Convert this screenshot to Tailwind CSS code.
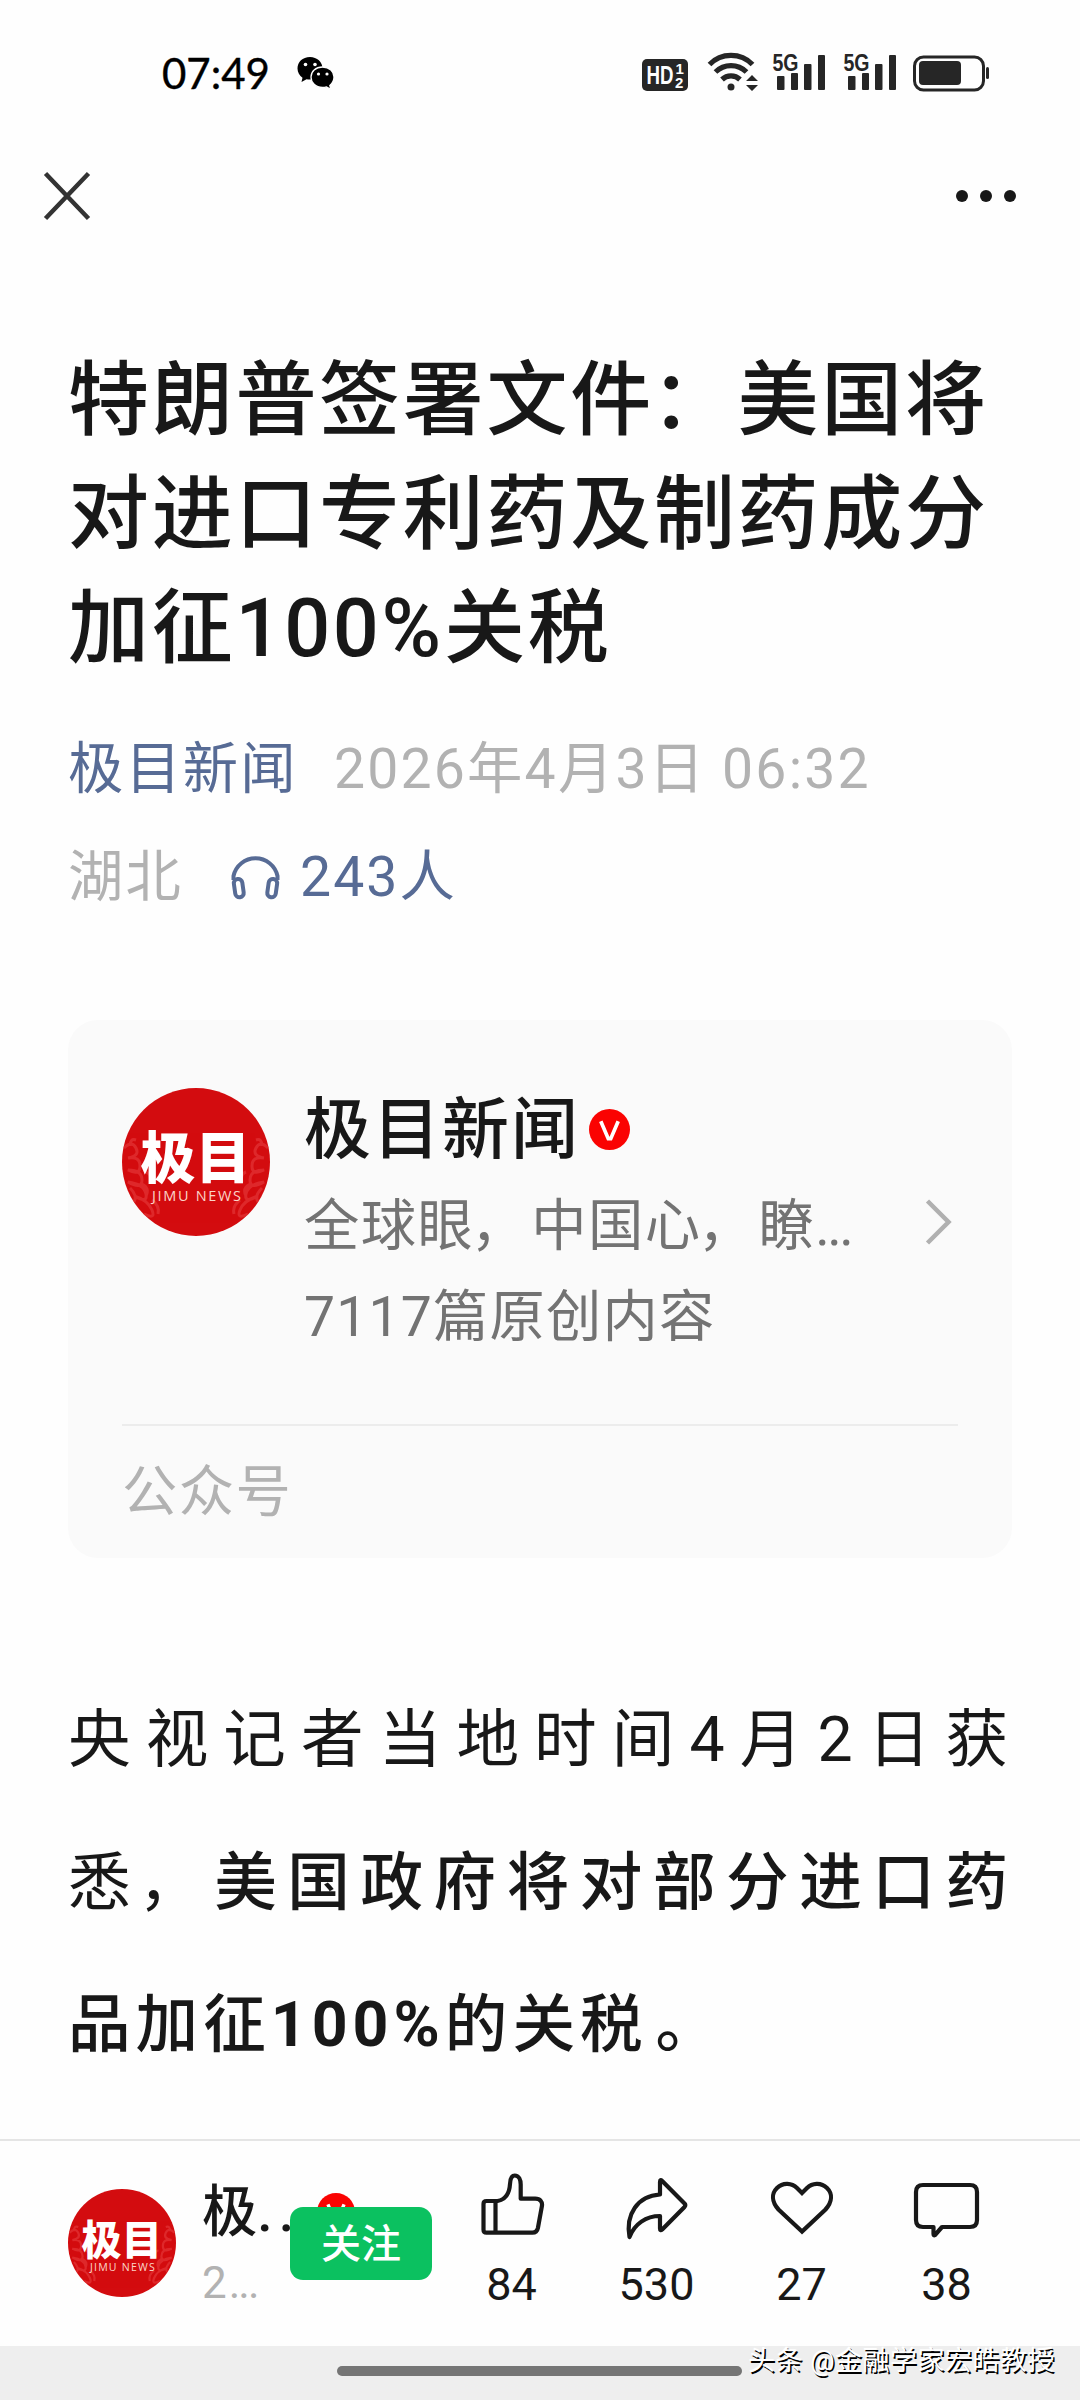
<!DOCTYPE html>
<html lang="zh-CN">
<head>
<meta charset="utf-8">
<title>极目新闻</title>
<script src="https://cdn.jsdelivr.net/npm/@tailwindcss/browser@4"></script>
</head>
<body class="bg-[#fefefe] text-[#181818]">
<div class="relative flex h-[2400px] w-[1080px] flex-col overflow-hidden font-['Roboto','Noto_Sans_CJK_SC',sans-serif]">
  <!-- status bar -->
  <header class="flex h-[146px] shrink-0 items-center pl-[162px]">
    <span class="w-[135px] font-['Lato',sans-serif] text-[42px] leading-none text-black [-webkit-text-stroke:0.4px_#000]">07:49</span>
    <svg class="h-[34px] w-[38px]" viewBox="0 0 38 34">
      <path d="M13 1C5.500 1 .5 6 .5 12.500c0 4 2 7 5 9.200L4.500 26l5-2.800c1.200.3 2.300.4 3.500.4 7 0 12.500-5 12.500-11.200S20 1 13 1Z"/>
      <path d="M25.500 11C18.500 11 14 15.500 14 21s4.500 10.500 11.500 10.500c1.400 0 2.800-.2 4-.6l4.300 2.300-1-3.800c2.500-2 4.200-4.800 4.200-8.400C37 15.500 32.500 11 25.500 11Z" stroke="#fefefe" stroke-width="1.300"/>
      <g fill="#fefefe"><circle cx="8.500" cy="8.500" r="1.800"/><circle cx="18" cy="8.500" r="1.800"/><circle cx="21.500" cy="18" r="1.600"/><circle cx="30" cy="18" r="1.600"/></g>
    </svg>
    <svg class="ml-[306px] h-[64px] w-[350px] overflow-visible" viewBox="641 41 350 64" fill="#262626">
      <rect x="642" y="59" width="46" height="32" rx="5"/>
      <g fill="#fefefe" font-family="Liberation Sans" font-weight="700">
        <text x="646.500" y="84" font-size="26" textLength="27" lengthAdjust="spacingAndGlyphs">HD</text>
        <text x="675.500" y="74" font-size="15">1</text><text x="675" y="87.500" font-size="15">2</text>
      </g>
      <g fill="none" stroke="#262626" stroke-width="5.200">
        <path d="M709.500 64.500a30 30 0 0 1 43 0M715.500 72a22 22 0 0 1 31 0M722 79.500a13 13 0 0 1 18 0"/>
      </g>
      <circle cx="731" cy="87" r="3.500"/>
      <path d="M746 81l6-6 6 6ZM746 85l6 6 6-6Z"/>
      <g id="sig">
        <text x="772.500" y="70.500" font-family="Liberation Sans" font-weight="700" font-size="24" textLength="26" lengthAdjust="spacingAndGlyphs">5G</text>
        <rect x="777" y="76" width="7.500" height="14" rx="1"/><rect x="791" y="73" width="7" height="17" rx="1"/><rect x="804" y="64" width="7.500" height="26" rx="1"/><rect x="818" y="55" width="7" height="35" rx="1"/>
      </g>
      <use href="#sig" x="71"/>
      <rect x="914.500" y="57" width="69" height="33" rx="9" fill="none" stroke="#262626" stroke-width="3"/>
      <rect x="919" y="61" width="42" height="24" rx="4"/>
      <rect x="986" y="67" width="3" height="12" rx="1.500"/>
    </svg>
  </header>
  <!-- navigation bar -->
  <nav class="flex h-[100px] shrink-0 items-center justify-between pr-[64px] pl-[43px]">
    <svg class="h-[50px] w-[50px]" viewBox="0 0 50 50" fill="none" stroke="#333" stroke-width="4.500"><path d="M2.500 2.500l43 45M45.500 2.500l-43 45"/></svg>
    <div class="flex gap-[12px]"><i class="size-[12px] rounded-full bg-[#181818]"></i><i class="size-[12px] rounded-full bg-[#181818]"></i><i class="size-[12px] rounded-full bg-[#181818]"></i></div>
  </nav>

  <main class="px-[68px]">
    <h1 class="mt-[98px] text-[81px] leading-[114px] font-medium tracking-[2.7px] whitespace-nowrap">特朗普签署文件<span class="relative left-[-3px]">：</span>美国将<br>对进口专利药及制药成分<br>加征100%关税</h1>
    <div class="mt-[30px] text-[55.3px] leading-[108px] tracking-[2.1px] whitespace-nowrap text-[#b2b2b2]">
      <div class="flex"><span class="w-[266px] text-[#576b95]">极目新闻</span><span class="tracking-[2.2px]">2026年4月3日 06:32</span></div>
      <div class="flex items-center"><span class="w-[162px]">湖北</span>
        <svg class="mr-[19px] mb-[5px] h-[50px] w-[51px]" viewBox="0 0 51 50" fill="none" stroke="#576b95" stroke-width="4"><path d="M3.500 29v-4a22.500 22.500 0 0 1 44 0v4"/><rect x="4.500" y="28" width="8.500" height="18.500" rx="4.200" transform="rotate(-8 8 37)"/><rect x="38" y="28" width="8.500" height="18.500" rx="4.200" transform="rotate(8 43 37)"/></svg>
        <span class="text-[#576b95]">243人</span></div>
    </div>

    <!-- official account card -->
    <section class="mt-[88px] flex h-[538px] flex-col rounded-[30px] bg-[#fafafa] px-[54px]">
      <div class="flex h-[406px] shrink-0 border-b-2 border-[#ececec] pt-[64px]">
        <svg class="mt-[4px] size-[148px] shrink-0" viewBox="0 0 148 148">
          <defs>
            <clipPath id="disc"><circle cx="74" cy="74" r="74"/></clipPath>
            <g id="logo"><circle cx="74" cy="74" r="74" fill="#d30c0f"/>
              <g clip-path="url(#disc)" fill="none" stroke="#e4383a" stroke-width="3" opacity=".65">
                <path d="M2 60q8-8 12 0t-8 10q12-2 12 8t-12 4q14 0 14 10t-14 2q16 2 18 12t-12 2q14 4 18 14t-8 4M20 96q8 4 4 12M14 52q-6-2-6 6M30 112q8 6 6 14M8 100q8 8 4 14M24 84q6 2 4 10"/>
                <path d="M146 60q-8-8-12 0t8 10q-12-2-12 8t12 4q-14 0-14 10t14 2q-16 2-18 12t12 2q-14 4-18 14t8 4M128 96q-8 4-4 12M134 52q6-2 6 6M118 112q-8 6-6 14M140 100q-8 8-4 14M124 84q-6 2-4 10"/>
              </g>
              <text x="18.500" y="90" fill="#fff" font-family="Noto Sans CJK SC" font-weight="900" font-size="56" textLength="110" lengthAdjust="spacingAndGlyphs">极目</text>
              <text x="30" y="112.500" fill="#fbd5c8" font-family="Open Sans" font-size="14.500" textLength="89">JIMU NEWS</text>
            </g>
          </defs>
          <use href="#logo"/>
        </svg>
        <div class="ml-[34px] w-[590px] whitespace-nowrap">
          <div class="flex h-[92px] items-center"><span class="text-[67px] leading-[92px] font-medium tracking-[2px]">极目新闻</span>
            <svg class="mb-[1px] ml-[9px] size-[41px]" viewBox="0 0 40 40"><circle cx="20" cy="20" r="20" fill="#fa0302"/><path d="M11.500 12l7.300 17h2.400l7.300-17" fill="none" stroke="#fff" stroke-width="3.600"/></svg></div>
          <p class="mt-[5px] text-[55.3px] leading-[91px] tracking-[1.500px] text-[#737373]">全球眼<span class="relative left-[-4px]">，</span>中国心<span class="relative left-[-4px]">，</span>瞭<span class="-tracking-[2.6px]">...</span></p>
          <p class="text-[55.3px] leading-[91px] tracking-[1.200px] text-[#737373]">7117篇原创内容</p>
        </div>
        <svg class="mt-[115px] ml-[30px] h-[46px] w-[28px] shrink-0" viewBox="0 0 28 46" fill="none" stroke="#b0b0b0" stroke-width="4.500"><path d="M3.500 2l21 21-21 21"/></svg>
      </div>
      <div class="pt-[13px] text-[55.3px] leading-[108px] tracking-[1.500px] text-[#b2b2b2]">公众号</div>
    </section>

    <!-- article body -->
    <article class="mt-[111px] text-[62.6px] leading-[142.500px] tracking-[5px] whitespace-nowrap">
      <div class="w-[945px] [text-align-last:justify]">央视记者当地时间4月2日获</div>
      <div class="w-[945px] [text-align-last:justify]">悉<span class="relative left-[-3px]">，</span><span class="font-medium">美国政府将对部分进口药</span></div>
      <div class="font-medium">品加征<b class="font-bold">100%</b>的关税<span class="relative left-[8px]">。</span></div>
    </article>
  </main>

  <!-- bottom toolbar -->
  <footer class="absolute inset-x-0 top-[2139px] flex h-[207px] border-t-2 border-[#e5e5e5] bg-[#fefefe] pl-[68px]">
    <svg class="mt-[48px] size-[108px] shrink-0" viewBox="0 0 148 148"><use href="#logo"/></svg>
    <div class="relative ml-[26px] w-[237px] whitespace-nowrap">
      <div class="mt-[32px] flex items-center leading-[80px]"><span class="text-[55.3px] font-medium">极<span class="tracking-[6px]">..</span></span></div>
      <div class="mt-[-2px] text-[44px] leading-[64px] text-[#b2b2b2]">2<span class="ml-[2px] -tracking-[2px]">...</span></div>
      <svg class="absolute top-[52px] left-[115px] size-[38px]" viewBox="0 0 40 40"><circle cx="20" cy="20" r="20" fill="#fa0302"/><path d="M11.500 12l7.300 17h2.400l7.300-17" fill="none" stroke="#fff" stroke-width="3.600"/></svg>
      <button class="absolute top-[66px] left-[88px] h-[73px] w-[142px] rounded-[13px] bg-[#0bc160] text-[40px] leading-[75px] font-medium text-white">关注</button>
    </div>
    <div class="grid w-[580px] grid-cols-4 text-center text-[45px] leading-[60px]">
      <div class="flex flex-col items-center pt-[28px]"><svg class="h-[76px] w-[70px]" viewBox="478 2169 70 76" fill="none" stroke="#181818" stroke-width="4.200" stroke-linejoin="round"><path d="M484.500 2204q0-3 3-3h11c8-1.500 12-8 12.500-17 .3-5.500 1.500-8.500 4.700-8.500 4.300 0 6 4.500 6 9v14.200h14.500c5 0 7.500 3 6.700 7.500l-4 21.800q-1 4.700-5.500 4.700H487.500q-3 0-3-3ZM496.500 2201v31"/></svg><span class="mt-[10px]">84</span></div>
      <div class="flex flex-col items-center pt-[28px]"><svg class="h-[76px] w-[70px]" viewBox="622 2169 70 76" fill="none" stroke="#181818" stroke-width="4.200" stroke-linejoin="round"><path d="M629.500 2237c-4-23 8-41 30.500-42.500v-12.500q0-3 2.200-1l22.300 22.500q1.500 1.700 0 3.400l-22.300 22.500q-2.200 2-2.200-1v-12.400c-14 0-25.500 8-30.500 21Z"/></svg><span class="mt-[10px]">530</span></div>
      <div class="flex flex-col items-center pt-[28px]"><svg class="h-[76px] w-[70px]" viewBox="766 2169 70 76" fill="none" stroke="#181818" stroke-width="4.200" stroke-linejoin="miter"><path d="M801 2231.500l-23.500-22c-7-8-7-16-1.500-21.500 6-6 15-5 20 0l5 5 5-5c5-5 14-6 20 0 5.500 5.500 5.500 13.500-1.500 21.500Z"/></svg><span class="mt-[10px]">27</span></div>
      <div class="flex flex-col items-center pt-[28px]"><svg class="h-[76px] w-[70px]" viewBox="912 2169 70 76" fill="none" stroke="#181818" stroke-width="4.200" stroke-linejoin="round"><path d="M923 2185h47q7 0 7 7v28q0 7-7 7h-28l-7 8q-1.500 1-1.500-1v-7H923q-7 0-7-7v-28q0-7 7-7Z"/></svg><span class="mt-[10px]">38</span></div>
    </div>
  </footer>
  <!-- system gesture area -->
  <div class="absolute inset-x-0 top-[2346px] h-[54px] bg-[#eee]">
    <div class="mt-[20px] ml-[337px] h-[10px] w-[405px] rounded-full bg-[#757575]"></div>
    <div class="absolute top-[-2px] left-[748px] text-[27px] leading-[34px] tracking-[0.500px] whitespace-nowrap text-white [text-shadow:1.500px_1.500px_0_#000]">头条 @金融学家宏皓教授</div>
  </div>
</div>
</body>
</html>
